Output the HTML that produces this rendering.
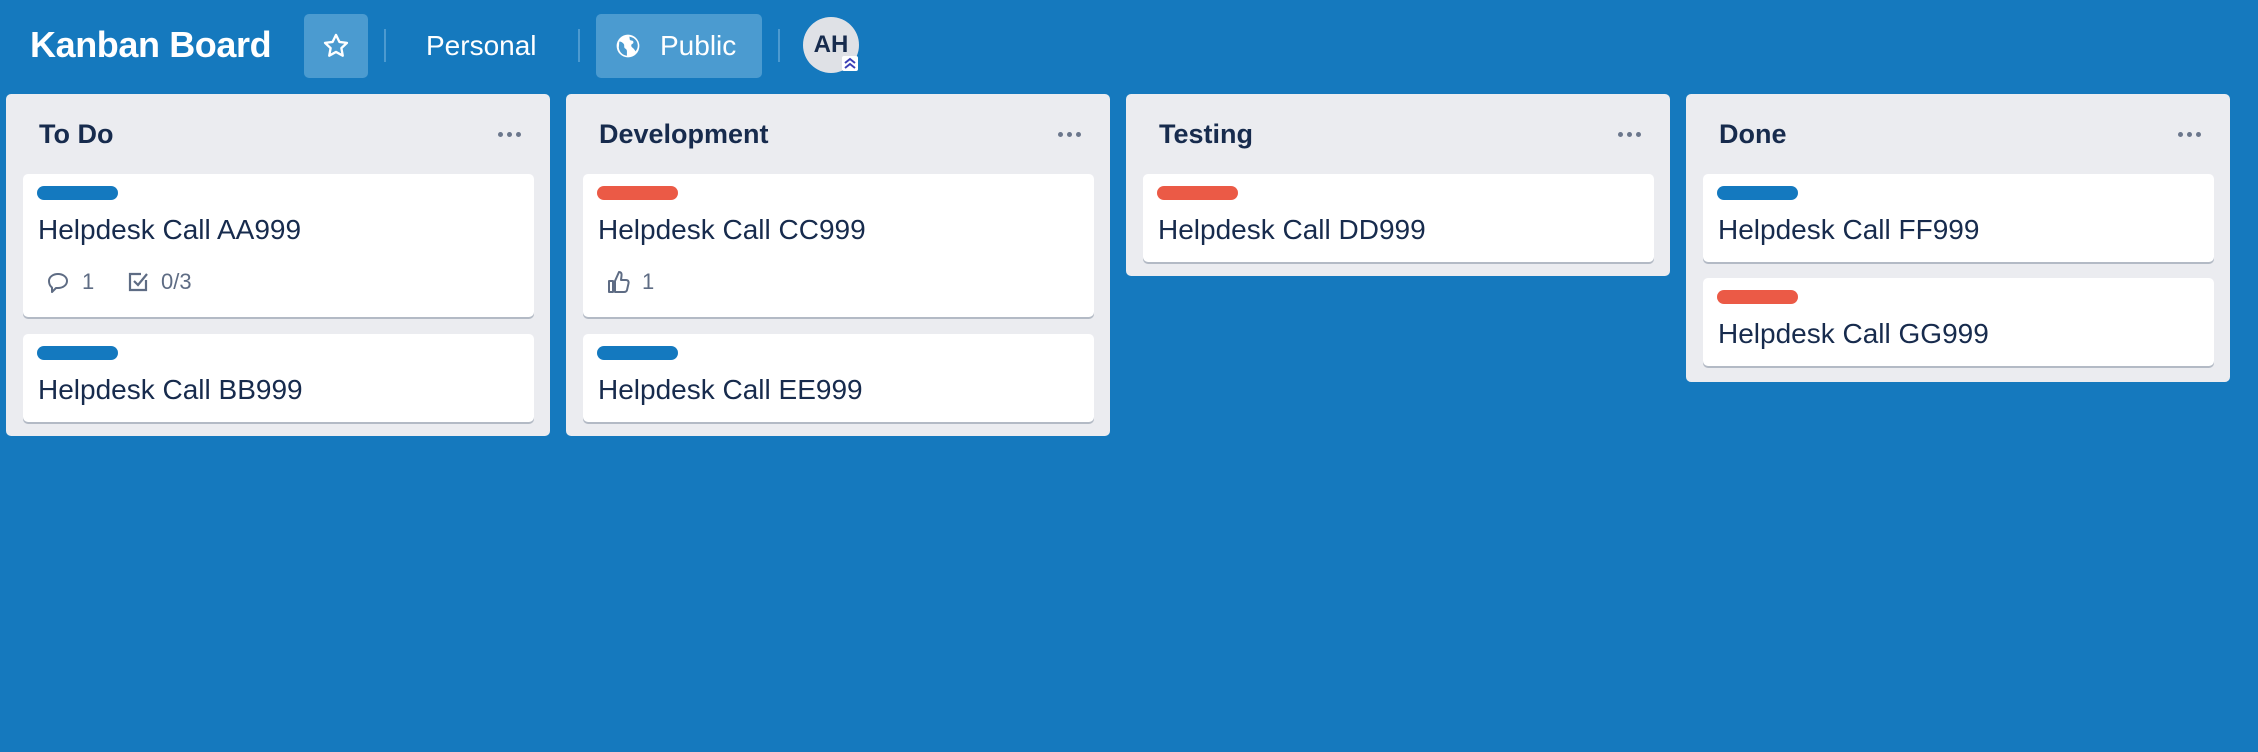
<!DOCTYPE html>
<html><head><meta charset="utf-8"><style>
*{box-sizing:border-box;margin:0;padding:0}
body{width:2258px;height:752px;background:#1579be;font-family:"Liberation Sans",Arial,sans-serif;position:relative;overflow:hidden;color:#172b4d}
.abs{position:absolute}
.title{left:30px;top:22px;font-size:36px;font-weight:bold;color:#fff;line-height:46px;letter-spacing:-0.4px}
.btn{background:#4b9bd0;border-radius:5px;top:14px;height:64px}
.div{width:2px;background:#4c9ad0;top:29px;height:33px}
.htxt{color:#fff;font-size:28px;line-height:64px;top:14px}
.avatar{left:803px;top:17px;width:56px;height:56px;border-radius:50%;background:#dfe1e6;color:#172b4d;font-weight:bold;font-size:24px;text-align:center;line-height:56px}
.list{top:94px;width:544px;background:#ebecf0;border-radius:5px}
.lh{position:absolute;left:33px;top:116px;font-size:27px;font-weight:bold;line-height:36px}
.dots{position:absolute;top:132px;display:flex;gap:4px}
.dots i{width:5px;height:5px;border-radius:50%;background:#6b778c;display:block}
.card{width:511px;background:#fff;border-radius:5px;box-shadow:0 2px 0 #b3bac5}
.lab{position:absolute;left:14px;top:12px;width:81px;height:14px;border-radius:7px}
.blue{background:#1479bf}.red{background:#eb5a46}
.ct{position:absolute;left:15px;top:38px;font-size:28px;line-height:36px;color:#172b4d}
.badge{position:absolute;top:95px;font-size:22px;color:#5e6c84;line-height:26px}
</style></head><body>
<div class="abs title">Kanban Board</div>
<div class="abs btn" style="left:304px;width:64px">
<svg class="abs" style="left:18px;top:18px" width="28" height="28" viewBox="0 0 24 24"><path d="M12 2.5l2.9 6 6.5.8-4.8 4.5 1.2 6.5L12 17.1l-5.8 3.2 1.2-6.5L2.6 9.3l6.5-.8z" fill="none" stroke="#fff" stroke-width="2" stroke-linejoin="round"/></svg>
</div>
<div class="abs div" style="left:384px"></div>
<div class="abs htxt" style="left:426px">Personal</div>
<div class="abs div" style="left:578px"></div>
<div class="abs btn" style="left:596px;width:166px">
<svg class="abs" style="left:19px;top:19px" width="26" height="26" viewBox="0 0 24 24"><circle cx="12" cy="12" r="10.5" fill="#fff"/><path d="M4 8c2 0 3 1 4 2s0 3 1 4 2 1 2 3v4c-4-.5-7-3.5-7.5-7.5zM13 3.5c1 1 0 2 1 3s3 0 3 2-2 1-2 3 2 2 3 4l1 1.5c1.5-2 2-3.5 2-5.5 0-4-3-7.5-8-8z" fill="#4b9bd0"/></svg>
<div class="abs htxt" style="left:64px;top:0">Public</div>
</div>
<div class="abs div" style="left:778px"></div>
<div class="abs avatar">AH</div>
<div class="abs" style="left:842px;top:56px;width:16px;height:15px;background:#fff;border-radius:2px">
<svg width="16" height="15" viewBox="0 0 16 15"><path d="M3 7l5-4 5 4M3 12l5-4 5 4" fill="none" stroke="#3b3fb6" stroke-width="2"/></svg>
</div>

<div class="abs list" style="left:6px;height:342px"></div>
<div class="abs list" style="left:566px;height:342px"></div>
<div class="abs list" style="left:1126px;height:182px"></div>
<div class="abs list" style="left:1686px;height:288px"></div>

<div class="lh" style="left:39px">To Do</div>
<div class="lh" style="left:599px">Development</div>
<div class="lh" style="left:1159px">Testing</div>
<div class="lh" style="left:1719px">Done</div>
<div class="dots" style="left:498px"><i></i><i></i><i></i></div>
<div class="dots" style="left:1058px"><i></i><i></i><i></i></div>
<div class="dots" style="left:1618px"><i></i><i></i><i></i></div>
<div class="dots" style="left:2178px"><i></i><i></i><i></i></div>

<div class="abs card" style="left:23px;top:174px;height:143px">
<div class="lab blue"></div><div class="ct">Helpdesk Call AA999</div>
<svg class="abs" style="left:23px;top:97px" width="24" height="24" viewBox="0 0 24 24"><path d="M12 3c5 0 9 3 9 7s-4 7-9 7h-2l-4 4v-4.5C4 15 3 12.5 3 10c0-4 4-7 9-7z" fill="none" stroke="#5e6c84" stroke-width="2" stroke-linejoin="round"/></svg>
<div class="badge" style="left:59px">1</div>
<svg class="abs" style="left:104px;top:97px" width="22" height="22" viewBox="0 0 22 22"><path d="M19 9v10H3V3h11" fill="none" stroke="#5e6c84" stroke-width="2.2"/><path d="M7 10l4 4 9-11" fill="none" stroke="#5e6c84" stroke-width="2.2"/></svg>
<div class="badge" style="left:138px">0/3</div>
</div>
<div class="abs card" style="left:23px;top:334px;height:88px">
<div class="lab blue"></div><div class="ct">Helpdesk Call BB999</div></div>

<div class="abs card" style="left:583px;top:174px;height:143px">
<div class="lab red"></div><div class="ct">Helpdesk Call CC999</div>
<svg class="abs" style="left:24px;top:95px" width="24" height="26" viewBox="0 0 24 26"><path d="M2 12h4v11H2zM8 12l4-9c2 0 3 1.5 2.5 4L14 11h5c2 0 3 1.5 2.5 3.5l-1.5 6.5c-.4 1.5-1.5 2-3 2H8z" fill="none" stroke="#5e6c84" stroke-width="2" stroke-linejoin="round"/></svg>
<div class="badge" style="left:59px">1</div>
</div>
<div class="abs card" style="left:583px;top:334px;height:88px">
<div class="lab blue"></div><div class="ct">Helpdesk Call EE999</div></div>

<div class="abs card" style="left:1143px;top:174px;height:88px">
<div class="lab red"></div><div class="ct">Helpdesk Call DD999</div></div>

<div class="abs card" style="left:1703px;top:174px;height:88px">
<div class="lab blue"></div><div class="ct">Helpdesk Call FF999</div></div>
<div class="abs card" style="left:1703px;top:278px;height:88px">
<div class="lab red"></div><div class="ct">Helpdesk Call GG999</div></div>
</body></html>
